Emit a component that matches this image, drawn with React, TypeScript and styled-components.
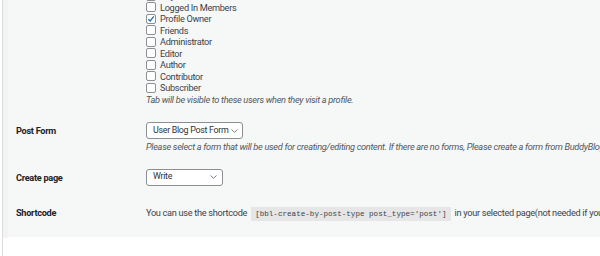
import React from "react";
import styled, { createGlobalStyle } from "styled-components";

const GlobalStyle = createGlobalStyle`
  html, body {
    margin: 0;
    padding: 0;
    background: #ffffff;
    overflow: hidden;
  }
  body {
    font-family: Roboto, "Noto Sans", sans-serif;
    font-size: 9.2px;
    letter-spacing: -0.3px;
    color: #3c434a;
  }
`;

const Page = styled.div`
  width: 598px;
  height: 256px;
  margin-left: 2px;
  border-left: 1px solid #dcdcde;
  overflow: hidden;
`;

const Gutter = styled.div`
  height: 100%;
  border-left: 5px solid #f3f3f4;
`;

const Panel = styled.div`
  margin-top: -18px;
  background: #f6f7f7;
  width: 700px;
`;

const Row = styled.div<{ $pt: number; $pb: number }>`
  display: grid;
  grid-template-columns: 138px 1fr;
  padding: ${({ $pt }) => $pt}px 0 ${({ $pb }) => $pb}px 0;
`;

const Label = styled.div<{ $lh?: number }>`
  padding-left: 8px;
  font-weight: 700;
  color: #1d2327;
  line-height: ${({ $lh }) => $lh ?? 17}px;
`;

const Field = styled.div`
  white-space: nowrap;
  line-height: 11.5px;
`;

const CheckList = styled.div`
  display: flex;
  flex-direction: column;
`;

const CheckRow = styled.label`
  display: flex;
  align-items: center;
  gap: 4px;
  height: 11.5px;
`;

const Box = styled.span`
  width: 10px;
  height: 10px;
  box-sizing: border-box;
  border: 1px solid #8c8f94;
  border-radius: 2px;
  background: #fff;
  display: flex;
  align-items: center;
  justify-content: center;
  flex-shrink: 0;
`;

const Description = styled.p`
  margin: 0;
  font-style: italic;
  color: #50575e;
  line-height: 11.5px;
`;

const Select = styled.div<{ $width: number }>`
  width: ${({ $width }) => $width}px;
  height: 17px;
  box-sizing: border-box;
  border: 1px solid #8c8f94;
  border-radius: 3px;
  background: #fff;
  display: flex;
  align-items: center;
  justify-content: space-between;
  gap: 3px;
  padding: 0 5px 0 6px;
  font-size: 8.9px;
  color: #2c3338;
  margin-bottom: 2px;
`;

const Code = styled.code`
  font-family: "Liberation Mono", "DejaVu Sans Mono", monospace;
  font-size: 7.6px;
  letter-spacing: 0;
  background: #e6e6e6;
  padding: 3px 4px;
  margin: 0 4px;
  color: #3c434a;
`;

const ShortcodeLine = styled.div`
  line-height: 14px;
  white-space: nowrap;
`;

const Chevron = () => (
  <svg width="7" height="4" viewBox="0 0 7 4" style={{ flexShrink: 0 }}>
    <path d="M0.5 0.5 L3.5 3.3 L6.5 0.5" fill="none" stroke="#6d7379" strokeWidth="0.9" />
  </svg>
);

const Check = () => (
  <svg width="8" height="8" viewBox="0 0 8 8">
    <path d="M1.3 4.2 L3.2 6 L6.8 1.4" fill="none" stroke="#2271b1" strokeWidth="1.3" />
  </svg>
);

const roles = [
  { name: "Anyone", checked: false },
  { name: "Logged In Members", checked: false },
  { name: "Profile Owner", checked: true },
  { name: "Friends", checked: false },
  { name: "Administrator", checked: false },
  { name: "Editor", checked: false },
  { name: "Author", checked: false },
  { name: "Contributor", checked: false },
  { name: "Subscriber", checked: false },
];

export default function App() {
  return (
    <>
      <GlobalStyle />
      <Page>
        <Gutter>
          <Panel>
            <Row $pt={8} $pb={8}>
              <Label $lh={11.5}>Tab is visible to</Label>
              <Field>
                <CheckList>
                  {roles.map((r) => (
                    <CheckRow key={r.name}>
                      <Box>{r.checked && <Check />}</Box>
                      {r.name}
                    </CheckRow>
                  ))}
                </CheckList>
                <Description>Tab will be visible to these users when they visit a profile.</Description>
              </Field>
            </Row>
            <Row $pt={9} $pb={8}>
              <Label>Post Form</Label>
              <Field>
                <Select $width={97}>
                  User Blog Post Form <Chevron />
                </Select>
                <Description>
                  Please select a form that will be used for creating/editing content. If there are no forms, Please create a form from BuddyBlog
                </Description>
              </Field>
            </Row>
            <Row $pt={8} $pb={10}>
              <Label>Create page</Label>
              <Field>
                <Select $width={77}>
                  Write <Chevron />
                </Select>
              </Field>
            </Row>
            <Row $pt={8} $pb={16}>
              <Label $lh={14}>Shortcode</Label>
              <ShortcodeLine>
                You can use the shortcode
                <Code>[bbl-create-by-post-type post_type='post']</Code>
                in your selected page(not needed if you
              </ShortcodeLine>
            </Row>
          </Panel>
        </Gutter>
      </Page>
    </>
  );
}
